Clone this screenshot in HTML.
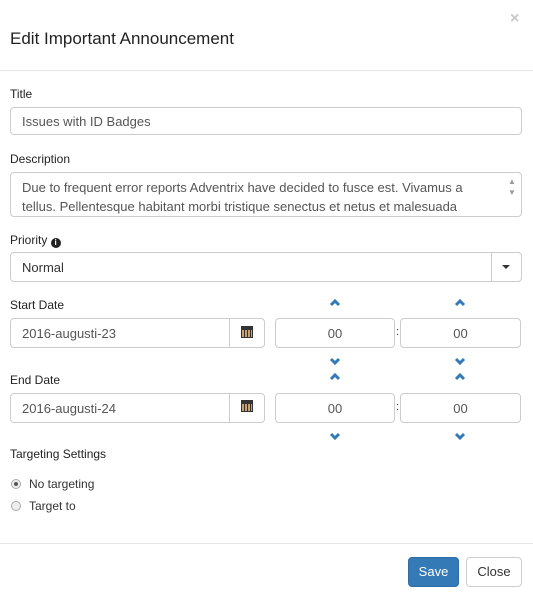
<!DOCTYPE html>
<html><head><style>
*{box-sizing:border-box;margin:0;padding:0}
body{width:533px;height:599px;background:#fff;font-family:"Liberation Sans",sans-serif;color:#333;position:relative;overflow:hidden}
.a{position:absolute}
.lbl{position:absolute;left:10px;font-size:12px;color:#222}
.inp{position:absolute;border:1px solid #ccc;border-radius:4px;font-size:13px;color:#555;padding-left:11px;display:flex;align-items:center;background:#fff}
.hr{position:absolute;left:0;width:533px;height:1px;background:#e5e5e5}
.t{justify-content:center;padding:0}
</style></head><body>
<div class="a" style="left:10px;top:29px;font-size:17px;color:#222">Edit Important Announcement</div>
<div class="a" style="left:510px;top:10px;font-size:16px;color:#c8c8c8;font-weight:bold">×</div>
<div class="hr" style="top:70px"></div>

<div class="lbl" style="top:87px">Title</div>
<div class="inp" style="left:10px;top:107px;width:512px;height:28px">Issues with ID Badges</div>

<div class="lbl" style="top:152px">Description</div>
<div class="inp" style="left:10px;top:172px;width:512px;height:45px;display:block;padding:5px 50px 0 11px;line-height:19px;overflow:hidden;font-size:13px">Due to frequent error reports Adventrix have decided to fusce est. Vivamus a tellus. Pellentesque habitant morbi tristique senectus et netus et malesuada fames ac turpis egestas. Proin pharetra nonummy pede. Mauris et orci.</div>
<div class="a" style="left:508px;top:176px;font-size:8px;color:#999;line-height:11px">▲<br>▼</div>

<div class="lbl" style="top:233px">Priority <span style="display:inline-block;width:10px;height:10px;border-radius:50%;background:#222;color:#fff;font-size:8px;font-weight:bold;text-align:center;line-height:10px;vertical-align:-1px">i</span></div>
<div class="inp" style="left:10px;top:252px;width:512px;height:30px;color:#333">Normal</div>
<div class="a" style="left:491px;top:253px;width:1px;height:28px;background:#ccc"></div>
<div class="a" style="left:502px;top:265px;width:0;height:0;border-left:4px solid transparent;border-right:4px solid transparent;border-top:4px solid #333"></div>

<div class="lbl" style="top:298px">Start Date</div>
<div class="inp" style="left:10px;top:318px;width:255px;height:30px">2016-augusti-23</div>
<div class="a" style="left:229px;top:318px;width:1px;height:30px;background:#ccc"></div>
<div class="a" style="left:241px;top:326px;width:12px;height:12px;background:#333;border-top:3px solid #333"><div style="margin:1px;height:7px;background:repeating-linear-gradient(90deg,#c8a070 0 2px,#333 2px 3px)"></div></div>
<div class="inp t" style="left:275px;top:318px;width:120px;height:30px">00</div>
<div class="a" style="left:396px;top:326px;font-size:11px">:</div>
<div class="inp t" style="left:400px;top:318px;width:121px;height:30px">00</div>

<div class="lbl" style="top:373px">End Date</div>
<div class="inp" style="left:10px;top:393px;width:255px;height:30px">2016-augusti-24</div>
<div class="a" style="left:229px;top:393px;width:1px;height:30px;background:#ccc"></div>
<div class="a" style="left:241px;top:400px;width:12px;height:12px;background:#333;border-top:3px solid #333"><div style="margin:1px;height:7px;background:repeating-linear-gradient(90deg,#c8a070 0 2px,#333 2px 3px)"></div></div>
<div class="inp t" style="left:275px;top:393px;width:120px;height:30px">00</div>
<div class="a" style="left:396px;top:401px;font-size:11px">:</div>
<div class="inp t" style="left:400px;top:393px;width:121px;height:30px">00</div>

<svg class="a" style="left:0;top:0" width="533" height="599">
<g fill="none" stroke="#337ab7" stroke-width="3">
<path d="M331 305l4-4 4 4M456 305l4-4 4 4M331 359l4 4 4-4M456 359l4 4 4-4M331 379l4-4 4 4M456 379l4-4 4 4M331 434l4 4 4-4M456 434l4 4 4-4"/>
</g></svg>

<div class="lbl" style="top:447px">Targeting Settings</div>
<div class="a" style="left:11px;top:479px;width:10px;height:10px;border-radius:50%;border:1px solid #aaa;background:#eee"><div style="width:4px;height:4px;border-radius:50%;background:#555;margin:2px"></div></div>
<div class="a" style="left:29px;top:477px;font-size:12px">No targeting</div>
<div class="a" style="left:11px;top:501px;width:10px;height:10px;border-radius:50%;border:1px solid #aaa;background:#eee"></div>
<div class="a" style="left:29px;top:499px;font-size:12px">Target to</div>

<div class="hr" style="top:543px"></div>
<div class="a" style="left:408px;top:557px;width:51px;height:30px;background:#337ab7;border:1px solid #2e6da4;border-radius:4px;color:#fff;font-size:13px;text-align:center;line-height:28px">Save</div>
<div class="a" style="left:466px;top:557px;width:56px;height:30px;background:#fff;border:1px solid #ccc;border-radius:4px;color:#333;font-size:13px;text-align:center;line-height:28px">Close</div>
</body></html>
